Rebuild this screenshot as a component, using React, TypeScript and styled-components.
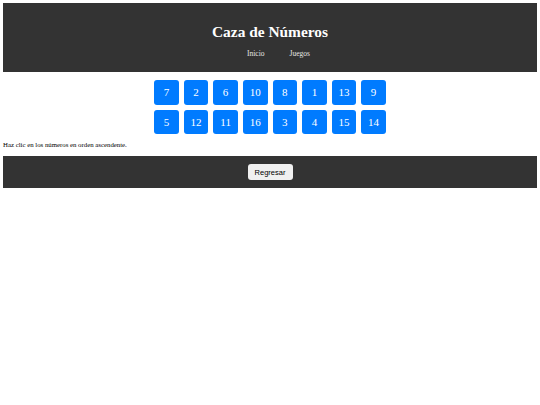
import React from "react";
import styled, { createGlobalStyle } from "styled-components";

const GlobalStyle = createGlobalStyle`
  html, body {
    margin: 0;
    padding: 0;
    background: #fff;
  }
  body {
    padding: 3px;
    font-family: "Liberation Serif", "Times New Roman", serif;
  }
`;

const numbers = [7, 2, 6, 10, 8, 1, 13, 9, 5, 12, 11, 16, 3, 4, 15, 14];

const App: React.FC = () => {
  return (
    <>
      <GlobalStyle />
      <Header>
        <Title>Caza de Números</Title>
        <Nav>
          <NavLink>Inicio</NavLink>
          <NavLink>Juegos</NavLink>
        </Nav>
      </Header>
      <Board>
        {numbers.map((n) => (
          <Cell key={n}>{n}</Cell>
        ))}
      </Board>
      <Hint>Haz clic en los números en orden ascendente.</Hint>
      <Footer>
        <BackButton>Regresar</BackButton>
      </Footer>
    </>
  );
};

export default App;

const Header = styled.header`
  background: #333;
  height: 69px;
  display: flex;
  flex-direction: column;
  align-items: center;
  box-sizing: border-box;
  padding-top: 19px;
`;

const Title = styled.h1`
  margin: 0;
  color: #fff;
  font-size: 15.4px;
  font-weight: bold;
  line-height: 20px;
`;

const Nav = styled.nav`
  display: flex;
  gap: 25px;
  margin-top: 7px;
  padding-left: 17px;
`;

const NavLink = styled.span`
  color: #e6e6e6;
  font-size: 7.5px;
  line-height: 10px;
`;

const Board = styled.div`
  display: grid;
  grid-template-columns: repeat(8, 24.6px);
  gap: 5px;
  justify-content: center;
  padding: 8px 0 6px;
`;

const Cell = styled.div`
  height: 24.6px;
  background: #007bff;
  border-radius: 3px;
  color: #fff;
  font-size: 11px;
  display: flex;
  align-items: center;
  justify-content: center;
`;

const Hint = styled.p`
  margin: 0;
  font-size: 6.8px;
  line-height: 10px;
  color: #000;
  padding-bottom: 6px;
`;

const Footer = styled.footer`
  background: #333;
  height: 32px;
  display: flex;
  align-items: center;
  justify-content: center;
`;

const BackButton = styled.button`
  width: 45px;
  height: 16px;
  padding: 0;
  border: none;
  border-radius: 3px;
  background: #f0f0f0;
  color: #000;
  font-family: "Liberation Sans", Arial, sans-serif;
  font-size: 7.5px;
`;
